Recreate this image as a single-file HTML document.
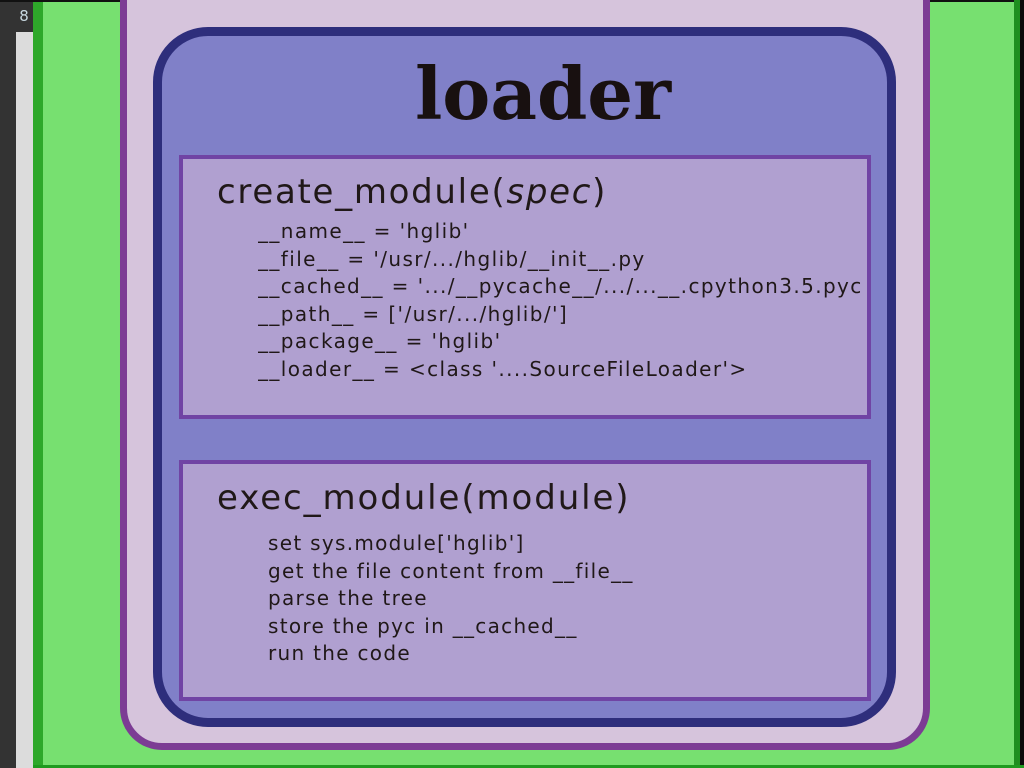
<!DOCTYPE html>
<html><head><style>
*{margin:0;padding:0;box-sizing:border-box}
body{width:1024px;height:768px;overflow:hidden;background:#77e070;position:relative;font-family:"DejaVu Sans","Liberation Sans",sans-serif;color:#201818}
.a{position:absolute}
</style></head><body>
<div class="a" style="left:0;top:0;width:16px;height:768px;background:#333"></div>
<div class="a" style="left:16px;top:0;width:17px;height:768px;background:#dcdcdc"></div>
<div class="a" style="left:10px;top:0;width:28px;height:32px;background:#333;color:#c8d8e0;font-size:15px;text-align:center;line-height:32px">8</div>
<div class="a" style="left:33px;top:0;width:10px;height:768px;background:#2ea82a"></div>
<div class="a" style="left:0;top:0;width:1024px;height:2px;background:#111"></div>
<div class="a" style="left:1014px;top:0;width:6px;height:768px;background:#1f8f1f"></div>
<div class="a" style="left:1020px;top:0;width:4px;height:768px;background:#0a0a0a"></div>
<div class="a" style="left:33px;top:765px;width:991px;height:3px;background:#1f9a1f"></div>
<div class="a" style="left:120px;top:-60px;width:810px;height:810px;background:#d6c4dc;border:7px solid #7c3c94;border-radius:42px"></div>
<div class="a" style="left:153px;top:27px;width:743px;height:700px;background:#8080c8;border:9px solid #2e2e7c;border-radius:55px"></div>
<div class="a" style="left:153px;top:58px;width:780px;text-align:center;font-family:'DejaVu Serif',serif;font-weight:bold;font-size:72px;line-height:72px;color:#181010">loader</div>
<div class="a" style="left:179px;top:155px;width:692px;height:264px;background:#b0a0d0;border:4px solid #7044a4"></div>
<div class="a" style="left:179px;top:460px;width:692px;height:241px;background:#b0a0d0;border:4px solid #7044a4"></div>
<div class="a" style="left:217px;top:170px;font-size:34px;line-height:44px;white-space:nowrap;letter-spacing:1.7px">create_module(<i>spec</i>)</div>
<div class="a" style="left:258px;top:218px;font-size:20px;line-height:27.6px;white-space:nowrap;width:612px;overflow:hidden;letter-spacing:1.4px">__name__ = 'hglib'<br>__file__ = '/usr/.../hglib/__init__.py<br>__cached__ = '.../__pycache__/.../...__.cpython3.5.pyc<br>__path__ = ['/usr/.../hglib/']<br>__package__ = 'hglib'<br>__loader__ = &lt;class '....SourceFileLoader'&gt;</div>
<div class="a" style="left:217px;top:476px;font-size:34px;line-height:44px;white-space:nowrap;letter-spacing:1.9px">exec_module(module)</div>
<div class="a" style="left:268px;top:530px;font-size:20px;line-height:27.6px;white-space:nowrap;letter-spacing:1.3px">set sys.module['hglib']<br>get the file content from __file__<br>parse the tree<br>store the pyc in __cached__<br>run the code</div>
</body></html>
